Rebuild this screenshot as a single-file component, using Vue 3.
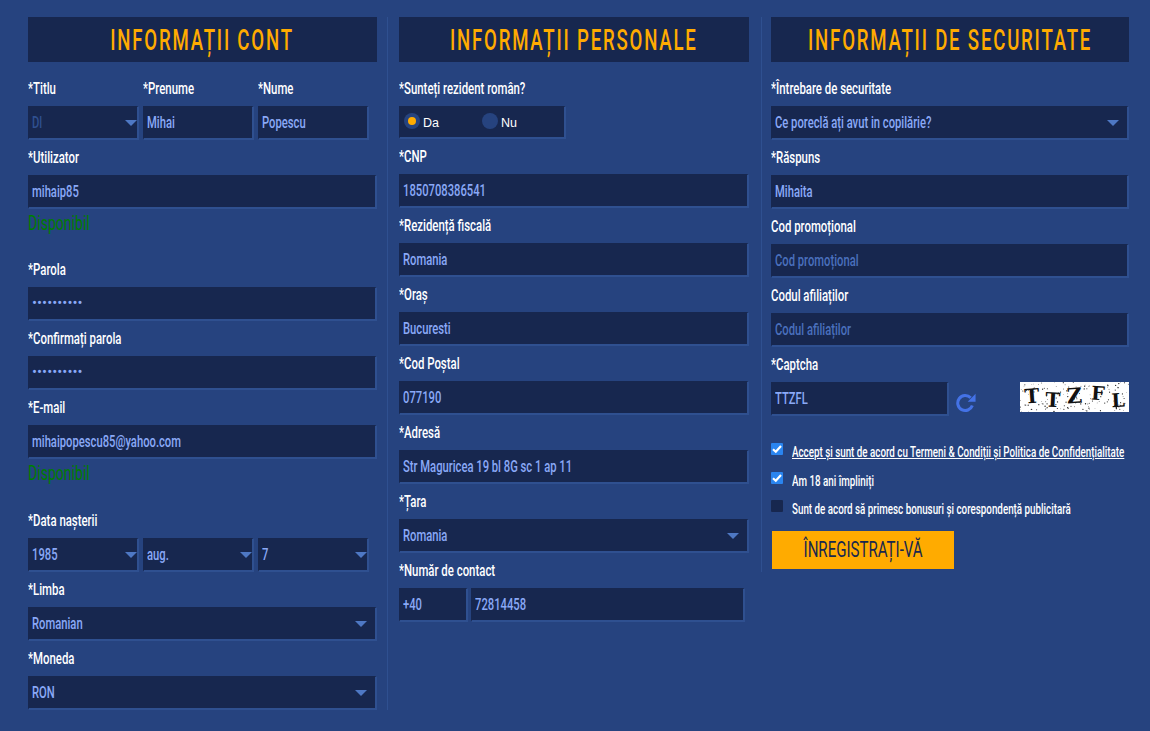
<script setup>
const col1Top = [
  { label: '*Parola', value: '••••••••••' },
  { label: '*Confirmați parola', value: '••••••••••' },
]
const col2 = [
  { label: '*CNP', value: '1850708386541' },
  { label: '*Rezidență fiscală', value: 'Romania' },
  { label: '*Oraș', value: 'Bucuresti' },
  { label: '*Cod Poștal', value: '077190' },
  { label: '*Adresă', value: 'Str Maguricea 19 bl 8G sc 1 ap 11' },
]
const col3 = [
  { label: 'Cod promoțional', placeholder: 'Cod promoțional' },
  { label: 'Codul afiliaților', placeholder: 'Codul afiliaților' },
]
let seed = 7
const rnd = () => { seed = (seed * 16807) % 2147483647; return seed / 2147483647 }
const dots = Array.from({ length: 150 }, () => ({ x: rnd() * 109, y: rnd() * 30, r: 0.3 + rnd() * 0.4 }))
const letters = [
  { c: 'T', x: 12.5, y: 21, r: -4, s: 20 },
  { c: 'T', x: 32.5, y: 25, r: 3, s: 20 },
  { c: 'Z', x: 55, y: 21, r: -4, s: 21 },
  { c: 'F', x: 77.5, y: 18, r: 4, s: 19 },
  { c: 'L', x: 98.5, y: 25, r: -3, s: 19 },
]
</script>

<template>
  <main class="page">
    <section class="col first">
      <h2 class="title"><span>INFORMAȚII CONT</span></h2>
      <div class="triple">
        <div class="field">
          <label><span class="t">*Titlu</span></label>
          <div class="box dim"><span class="t">Dl</span><i class="arrow"></i></div>
        </div>
        <div class="field">
          <label><span class="t">*Prenume</span></label>
          <div class="box"><span class="t">Mihai</span></div>
        </div>
        <div class="field">
          <label><span class="t">*Nume</span></label>
          <div class="box"><span class="t">Popescu</span></div>
        </div>
      </div>
      <div class="field">
        <label><span class="t">*Utilizator</span></label>
        <div class="box"><span class="t">mihaip85</span></div>
        <p class="ok short"><span class="t">Disponibil</span></p>
      </div>
      <div class="field" v-for="f in col1Top" :key="f.label">
        <label><span class="t">{{ f.label }}</span></label>
        <div class="box pass"><span>{{ f.value }}</span></div>
      </div>
      <div class="field">
        <label><span class="t">*E-mail</span></label>
        <div class="box"><span class="t">mihaipopescu85@yahoo.com</span></div>
        <p class="ok"><span class="t">Disponibil</span></p>
      </div>
      <div class="triple">
        <div class="field">
          <label><span class="t">*Data nașterii</span></label>
          <div class="box"><span class="t">1985</span><i class="arrow"></i></div>
        </div>
        <div class="field">
          <label>&nbsp;</label>
          <div class="box"><span class="t">aug.</span><i class="arrow"></i></div>
        </div>
        <div class="field">
          <label>&nbsp;</label>
          <div class="box"><span class="t">7</span><i class="arrow"></i></div>
        </div>
      </div>
      <div class="field">
        <label><span class="t">*Limba</span></label>
        <div class="box"><span class="t">Romanian</span><i class="arrow"></i></div>
      </div>
      <div class="field">
        <label><span class="t">*Moneda</span></label>
        <div class="box"><span class="t">RON</span><i class="arrow"></i></div>
      </div>
    </section>

    <section class="col second">
      <h2 class="title"><span>INFORMAȚII PERSONALE</span></h2>
      <div class="field">
        <label><span class="t">*Sunteți rezident român?</span></label>
        <div class="box radios">
          <span class="radio on"><i></i>Da</span>
          <span class="radio"><i></i>Nu</span>
        </div>
      </div>
      <div class="field" v-for="f in col2" :key="f.label">
        <label><span class="t">{{ f.label }}</span></label>
        <div class="box"><span class="t">{{ f.value }}</span></div>
      </div>
      <div class="field">
        <label><span class="t">*Țara</span></label>
        <div class="box low"><span class="t">Romania</span><i class="arrow"></i></div>
      </div>
      <div class="field">
        <label><span class="t">*Număr de contact</span></label>
        <div class="phone">
          <div class="box prefix"><span class="t">+40</span></div>
          <div class="box number"><span class="t">72814458</span></div>
        </div>
      </div>
    </section>

    <section class="col third">
      <h2 class="title"><span>INFORMAȚII DE SECURITATE</span></h2>
      <div class="field">
        <label><span class="t">*Întrebare de securitate</span></label>
        <div class="box"><span class="t">Ce poreclă ați avut in copilărie?</span><i class="arrow"></i></div>
      </div>
      <div class="field">
        <label><span class="t">*Răspuns</span></label>
        <div class="box"><span class="t">Mihaita</span></div>
      </div>
      <div class="field" v-for="f in col3" :key="f.label">
        <label><span class="t">{{ f.label }}</span></label>
        <div class="box ph"><span class="t">{{ f.placeholder }}</span></div>
      </div>
      <div class="field">
        <label><span class="t">*Captcha</span></label>
        <div class="captcha">
          <div class="box code"><span class="t">TTZFL</span></div>
          <svg class="refresh" viewBox="0 0 24 24" width="20" height="20">
            <path d="M19.6 15a9 9 0 1 1-2-9.2" fill="none" stroke="currentColor" stroke-width="3.6"/>
            <path d="M23.5 1v9.5h-9.5z" fill="currentColor"/>
          </svg>
          <svg class="capimg" viewBox="0 0 109 30" width="109" height="30">
            <rect width="109" height="30" fill="#fff"/>
            <text v-for="(l, i) in letters" :key="i" :x="l.x" :y="l.y" :font-size="l.s" :transform="`rotate(${l.r} ${l.x} ${l.y})`" text-anchor="middle" class="capletter">{{ l.c }}</text>
            <circle v-for="(d, i) in dots" :key="'d' + i" :cx="d.x" :cy="d.y" :r="d.r" fill="#222"/>
          </svg>
        </div>
      </div>
      <div class="checks">
        <div class="check link">
          <i class="cb on"><svg viewBox="0 0 12 12" width="12" height="12"><path d="M2 6.2l2.8 2.6L10 3" fill="none" stroke="#fff" stroke-width="2.2"/></svg></i>
          <span class="t">Accept și sunt de acord cu Termeni &amp; Condiții și Politica de Confidențialitate</span>
        </div>
        <div class="check">
          <i class="cb on"><svg viewBox="0 0 12 12" width="12" height="12"><path d="M2 6.2l2.8 2.6L10 3" fill="none" stroke="#fff" stroke-width="2.2"/></svg></i>
          <span class="t">Am 18 ani împliniți</span>
        </div>
        <div class="check">
          <i class="cb"></i>
          <span class="t">Sunt de acord să primesc bonusuri și corespondență publicitară</span>
        </div>
      </div>
      <button class="submit" type="button"><span>ÎNREGISTRAȚI-VĂ</span></button>
    </section>
  </main>
</template>

<style>
html, body { margin: 0; background: #26437f; }
</style>

<style scoped>
.page {
  width: 1150px;
  height: 731px;
  box-sizing: border-box;
  padding: 17px 0 0 28px;
  display: flex;
  align-items: flex-start;
  background: #26437f;
  font-family: Roboto, "Liberation Sans", sans-serif;
  overflow: hidden;
}
.col { box-sizing: border-box; min-width: 0; }
.first { width: 360px; height: 693px; padding-right: 10px; border-right: 1px solid #2f5090; }
.second { width: 363px; height: 555px; margin-left: 11px; padding-right: 12px; border-right: 1px solid #2f5090; }
.third { width: 358px; margin-left: 9px; }
.t {
  display: inline-block;
  white-space: nowrap;
  transform: scaleX(0.69);
  transform-origin: left center;
}
.title {
  display: flex;
  justify-content: center;
  margin: 0 0 9px;
  height: 45px;
  line-height: 46px;
  background: #17274f;
  color: #ffab00;
  font-size: 30px;
  font-weight: 500;
  letter-spacing: 2.9px;
  white-space: nowrap;
}
.title span { flex: none; transform: scaleX(0.62); }
.field { display: flex; flex-direction: column; min-width: 0; }
label {
  height: 35px;
  line-height: 35px;
  color: #fff;
  font-size: 16.5px;
  font-weight: 500;
}
.triple { display: flex; gap: 4px; width: 341px; }
.triple .field { flex: 1 1 0; }
.box {
  box-sizing: border-box;
  height: 34px;
  line-height: 31px;
  padding: 0 3px;
  background: #17274f;
  border: 1px solid #17274f;
  border-right: 2px solid #2f5090;
  border-bottom: 2px solid #2f5090;
  color: #8aa9f7;
  font-size: 16.5px;
  font-weight: 500;
  position: relative;
  white-space: nowrap;
  overflow: hidden;
}
.box .t { transform: scaleX(0.68); }
.low { line-height: 32px; }
.dim { color: #2f5090; }
.ph { color: #4a70bd; }
.pass { font-size: 15px; font-weight: 400; }
.arrow {
  position: absolute;
  right: 8px;
  top: 13px;
  width: 0;
  height: 0;
  border-left: 6.5px solid transparent;
  border-right: 6.5px solid transparent;
  border-top: 6.5px solid #4e78c4;
}
.triple .arrow { right: 0; }
.ok { margin: 0; height: 44px; line-height: 28px; color: #007d00; font-size: 21px; }
.ok.short { height: 43px; }
.ok .t { transform: scaleX(0.67); }
.box.radios { width: 167px; height: 33px; padding: 0 4px; display: flex; align-items: center; }
.radio { display: flex; align-items: center; color: #fff; font: 12.5px/1 "Liberation Sans", sans-serif; width: 87px; padding-top: 2px; }
.radio i {
  display: flex;
  align-items: center;
  justify-content: center;
  box-sizing: border-box;
  width: 16px;
  height: 16px;
  margin: -4px 3px 0 0;
  border-radius: 50%;
  background: #26437f;
}
.radio.on i::after { content: ""; width: 8px; height: 8px; border-radius: 50%; background: #ffab00; }
.phone { display: flex; gap: 3px; }
.phone .prefix { width: 69px; }
.phone .number { width: 274px; }
.captcha { display: flex; align-items: flex-start; }
.captcha .code { width: 178px; padding-left: 3px; }
.refresh { color: #4472e6; margin: 11px 0 0 7px; flex: none; }
.capimg { margin: 0 0 0 44px; flex: none; }
.capletter { font-family: "DejaVu Serif", serif; font-weight: 700; fill: #111; }
.checks { margin-top: 22px; }
.check {
  display: flex;
  align-items: center;
  height: 28.5px;
  color: #fff;
  font-size: 14px;
  font-weight: 500;
}
.check .t { transform: scaleX(0.7); }
.check.link .t { text-decoration: underline; }
.cb {
  box-sizing: border-box;
  width: 12px;
  height: 12px;
  margin: -6px 9px 0 0;
  background: #17274f;
  border-radius: 1px;
  flex: none;
}
.cb.on { background: #2a85f0; }
.cb svg { display: block; }
.submit {
  display: flex;
  justify-content: center;
  align-items: center;
  width: 182px;
  height: 38px;
  margin: 7px 0 0 1px;
  border: 0;
  background: #ffab00;
  color: #17274f;
  font: 400 21.5px Roboto, "Liberation Sans", sans-serif;
  padding: 0;
  white-space: nowrap;
}
.submit span { flex: none; transform: scaleX(0.7); }
</style>
